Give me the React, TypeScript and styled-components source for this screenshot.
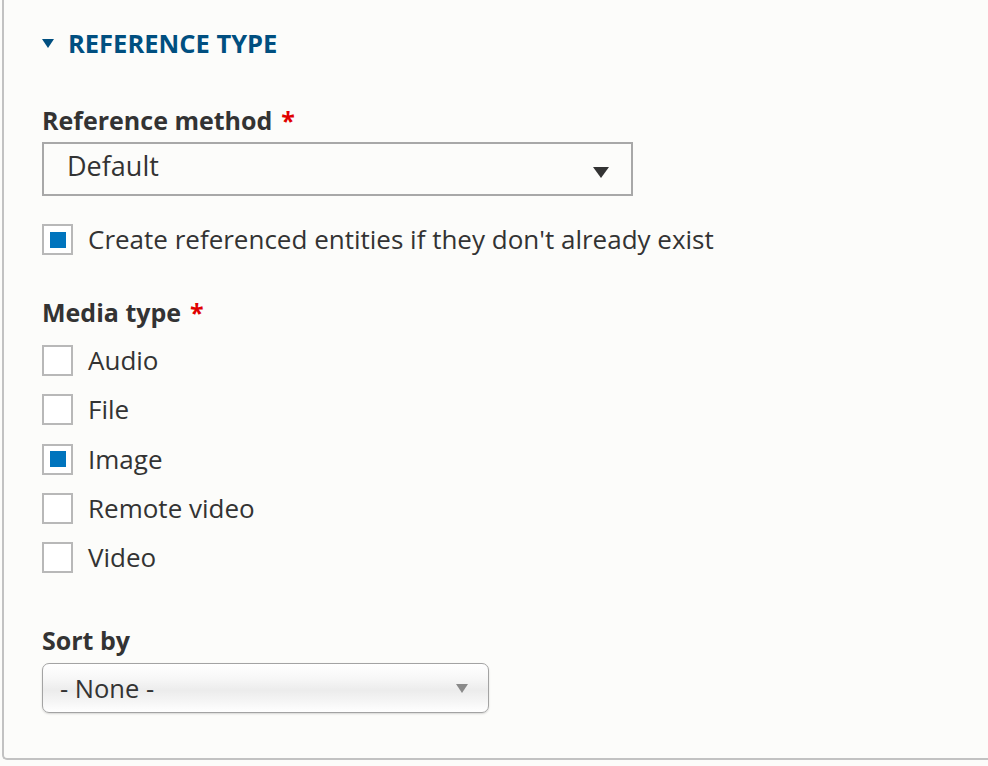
import React from "react";
import styled, { createGlobalStyle } from "styled-components";

const Global = createGlobalStyle`
  html, body { margin: 0; padding: 0; background: #fcfcfa; overflow: hidden; }
  body { font-family: "Open Sans", "Noto Sans", sans-serif; color: #333; }
`;

const Panel = styled.div`
  margin-left: 2px;
  width: 1100px;
  height: 760px;
  box-sizing: border-box;
  background: #fcfcfa;
  border-left: 2px solid #c2c2c2;
  border-bottom: 2px solid #c2c2c2;
  border-bottom-left-radius: 5px;
  padding: 28px 0 0 38px;
`;

const Summary = styled.div`
  display: flex;
  align-items: center;
  gap: 14px;
  height: 30px;
  color: #004f80;
  font-size: 25.5px;
  font-weight: 700;
  text-transform: uppercase;
  line-height: 30px;
`;

const Label = styled.div<{ $mt: number }>`
  margin-top: ${(p) => p.$mt}px;
  font-size: 25px;
  line-height: 30px;
  font-weight: 700;
  color: #333;
`;

const Required = styled.span`
  color: #e00000;
  margin-left: 9px;
`;

const SelectBox = styled.div`
  margin-top: 7px;
  width: 591px;
  height: 54px;
  box-sizing: border-box;
  border: 2px solid #a8a8a8;
  background: #fcfcfa;
  display: flex;
  align-items: center;
  justify-content: space-between;
  padding: 0 22px 0 23px;
  font-size: 27px;
  color: #333;
`;

const SelectText = styled.span<{ $lift: number }>`
  margin-bottom: ${(p) => p.$lift}px;
`;

const SelectArrow = styled.span<{ $drop: number }>`
  display: flex;
  margin-top: ${(p) => p.$drop}px;
`;

const MacSelect = styled.div`
  margin-top: 7.7px;
  width: 447px;
  height: 50px;
  box-sizing: border-box;
  border: 1.5px solid #a3a3a3;
  border-radius: 7px;
  background: linear-gradient(#ffffff 0%, #f7f7f7 30%, #ececec 55%, #f6f6f6 80%, #ffffff 100%);
  box-shadow: 0 1px 2px rgba(0, 0, 0, 0.15);
  display: flex;
  align-items: center;
  justify-content: space-between;
  padding: 0 20px 0 17px;
  font-size: 25.5px;
  color: #333;
`;

const CheckRow = styled.label<{ $mt?: number }>`
  display: flex;
  align-items: center;
  gap: 15px;
  margin-top: ${(p) => p.$mt ?? 0}px;
  font-size: 26px;
  line-height: 31px;
  color: #333;
`;

const Box = styled.span<{ $checked?: boolean }>`
  width: 31px;
  height: 31px;
  box-sizing: border-box;
  border: 2px solid #b8b8b8;
  background: #fff;
  display: flex;
  align-items: center;
  justify-content: center;
  flex-shrink: 0;
  &::after {
    content: "";
    width: 16px;
    height: 16px;
    background: ${(p) => (p.$checked ? "#0074bd" : "transparent")};
  }
`;

const Options = styled.div`
  margin-top: 17.7px;
  display: flex;
  flex-direction: column;
  gap: 18.3px;
`;

const Caret = ({ w, h, color }: { w: number; h: number; color: string }) => (
  <svg width={w} height={h} viewBox={`0 0 ${w} ${h}`}>
    <polygon points={`0,0 ${w},0 ${w / 2},${h}`} fill={color} />
  </svg>
);

const Check = ({ label, checked, mt }: { label: string; checked?: boolean; mt?: number }) => (
  <CheckRow $mt={mt}>
    <Box $checked={checked} />
    {label}
  </CheckRow>
);

export default function App() {
  return (
    <>
      <Global />
      <Panel>
        <Summary>
          <Caret w={12} h={9} color="#004f80" />
          Reference type
        </Summary>
        <Label $mt={47}>
          Reference method<Required>*</Required>
        </Label>
        <SelectBox>
          <SelectText $lift={7}>Default</SelectText>
          <SelectArrow $drop={6}>
            <Caret w={16} h={11} color="#333" />
          </SelectArrow>
        </SelectBox>
        <Check mt={28} checked label="Create referenced entities if they don't already exist" />
        <Label $mt={42.3}>
          Media type<Required>*</Required>
        </Label>
        <Options>
          <Check label="Audio" />
          <Check label="File" />
          <Check label="Image" checked />
          <Check label="Remote video" />
          <Check label="Video" />
        </Options>
        <Label $mt={52.3}>Sort by</Label>
        <MacSelect>
          <span>- None -</span>
          <Caret w={12} h={9} color="#8a8a8a" />
        </MacSelect>
      </Panel>
    </>
  );
}
